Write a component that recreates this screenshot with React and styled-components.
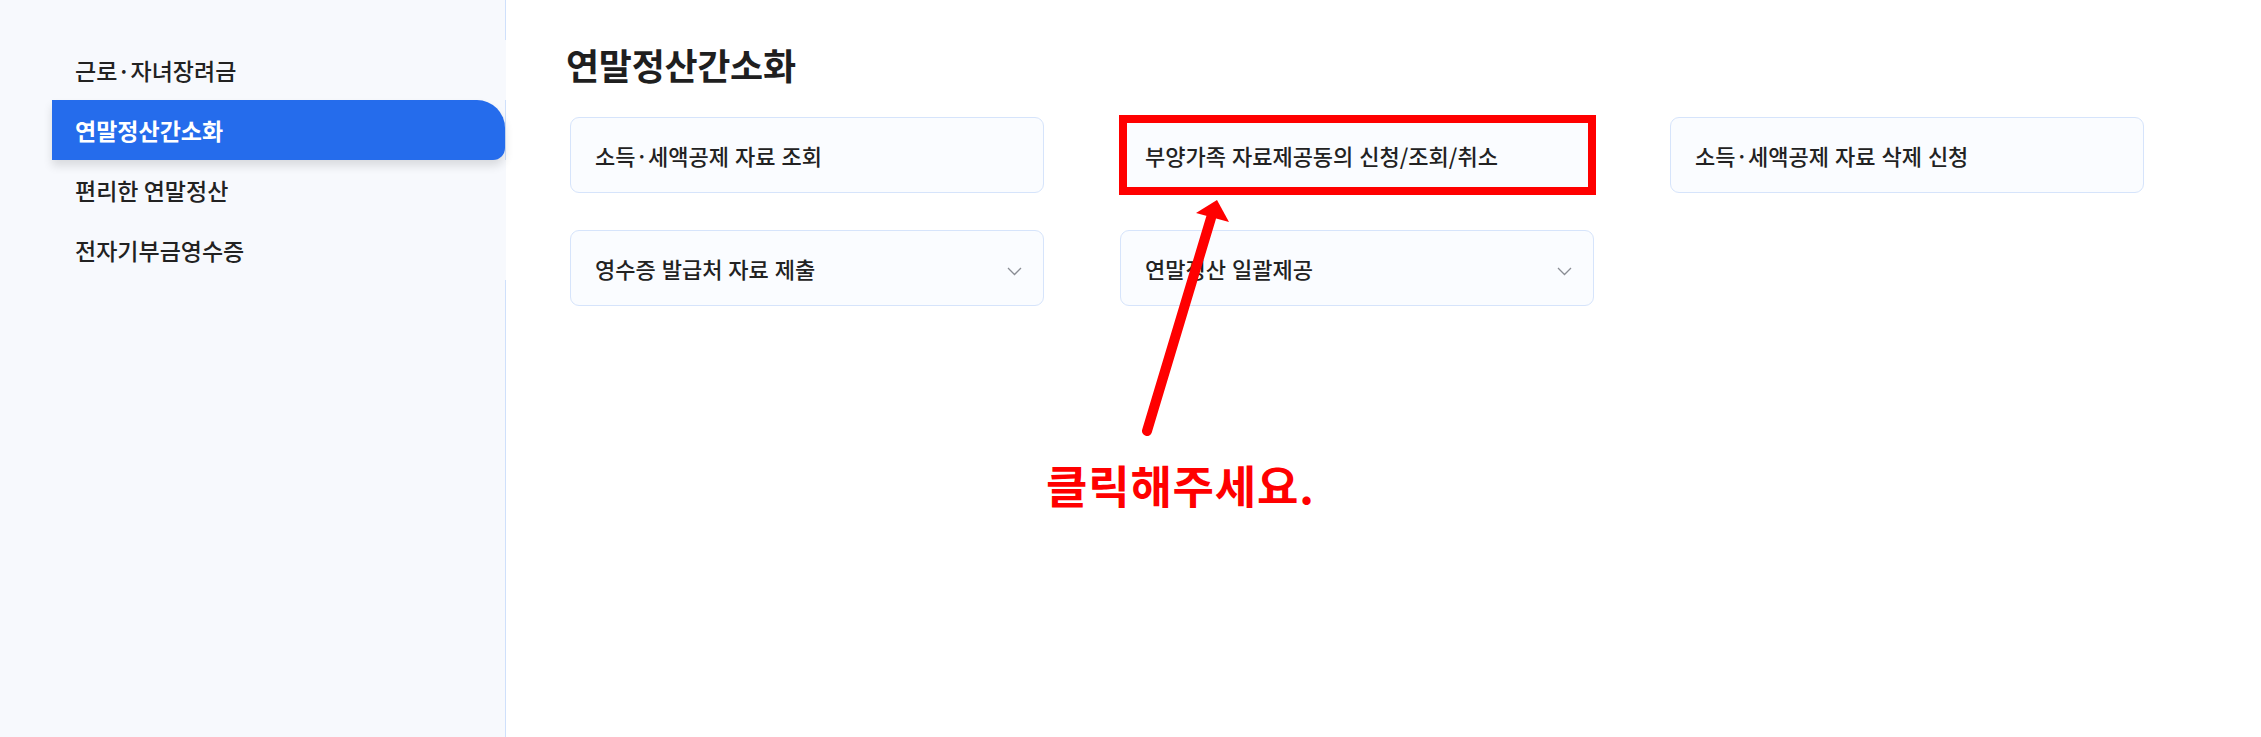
import React from 'react';
import styled, { createGlobalStyle } from 'styled-components';

const GlobalStyle = createGlobalStyle`
  html, body {
    margin: 0;
    padding: 0;
    background: #ffffff;
  }
  body {
    font-family: 'Noto Sans CJK KR', 'Noto Sans', sans-serif;
    color: #222222;
  }
  * {
    box-sizing: border-box;
  }
`;

const Page = styled.div`
  position: relative;
  display: flex;
  width: 2261px;
  height: 737px;
  overflow: hidden;
`;

const Sidebar = styled.aside`
  width: 506px;
  flex: none;
  padding: 40px 0 0 52px;
  background: #f7f9fd;
  border-right: 1px solid #cfe0fb;
`;

const Menu = styled.ul`
  list-style: none;
  margin: 0;
  padding: 0;
`;

const MenuItem = styled.li`
  height: 60px;
  display: flex;
  align-items: center;
  padding-left: 23px;
  margin-right: ${p => (p.active ? '0' : '-1px')};
  font-size: 23px;
  letter-spacing: 0;
  font-weight: ${p => (p.active ? 700 : 500)};
  color: ${p => (p.active ? '#ffffff' : '#222222')};
  background: ${p => (p.active ? '#256cec' : '#f7f9fd')};
  border-radius: ${p => (p.active ? '0 28px 12px 0' : '0')};
  box-shadow: ${p => (p.active ? '0 6px 10px rgba(0, 0, 0, 0.12)' : 'none')};
  position: relative;
  z-index: ${p => (p.active ? 1 : 0)};
`;

const Main = styled.main`
  flex: 1;
  padding: 42px 0 0 64px;
`;

const Title = styled.h1`
  margin: 0 0 31px -4px;
  font-size: 36px;
  line-height: 44px;
  font-weight: 700;
  letter-spacing: -0.3px;
  color: #1f1f1f;
`;

const CardGrid = styled.div`
  display: grid;
  grid-template-columns: repeat(3, 474px);
  grid-auto-rows: 76px;
  column-gap: 76px;
  row-gap: 37px;
`;

const Card = styled.div`
  position: relative;
  display: flex;
  align-items: center;
  justify-content: space-between;
  padding: 0 21px 0 24px;
  background: #fafcff;
  border: 1px solid #d6e4fb;
  border-radius: 9px;
  font-size: 22px;
  font-weight: 500;
  letter-spacing: 0;
  word-spacing: 1px;
  color: #222222;
`;

const Chevron = styled.svg`
  width: 15px;
  height: 9px;
  margin-top: 7px;
  flex: none;
`;

const Highlight = styled.div`
  position: absolute;
  top: -3px;
  bottom: -3px;
  left: -2px;
  right: -3px;
  border: 8px solid #ff0000;
  pointer-events: none;
`;

const Annotation = styled.div`
  position: absolute;
  left: 1040px;
  top: 190px;
  display: flex;
  flex-direction: column;
  pointer-events: none;
`;

const Arrow = styled.svg`
  width: 200px;
  height: 250px;
  display: block;
`;

const Hint = styled.div`
  margin: 19px 0 0 6px;
  font-size: 45px;
  line-height: 52px;
  font-weight: 700;
  letter-spacing: 0.8px;
  color: #ff0000;
`;

const menuItems = ['근로·자녀장려금', '연말정산간소화', '편리한 연말정산', '전자기부금영수증'];

const cards = [
  { label: '소득·세액공제 자료 조회' },
  { label: '부양가족 자료제공동의 신청/조회/취소', highlight: true },
  { label: '소득·세액공제 자료 삭제 신청' },
  { label: '영수증 발급처 자료 제출', dropdown: true },
  { label: '연말정산 일괄제공', dropdown: true },
];

const ChevronDown = () => (
  <Chevron viewBox="0 0 15 9">
    <polyline points="1,1 7.5,7.5 14,1" fill="none" stroke="#8a8d94" strokeWidth="1.3" />
  </Chevron>
);

const App = () => (
  <>
    <GlobalStyle />
    <Page>
      <Sidebar>
        <Menu>
          {menuItems.map(item => (
            <MenuItem key={item} active={item === '연말정산간소화'}>
              {item}
            </MenuItem>
          ))}
        </Menu>
      </Sidebar>
      <Main>
        <Title>연말정산간소화</Title>
        <CardGrid>
          {cards.map(card => (
            <Card key={card.label}>
              <span>{card.label}</span>
              {card.dropdown && <ChevronDown />}
              {card.highlight && <Highlight />}
            </Card>
          ))}
        </CardGrid>
      </Main>
      <Annotation>
        <Arrow viewBox="0 0 200 250">
          <line x1="107" y1="241" x2="171" y2="28" stroke="#ff0000" strokeWidth="10" strokeLinecap="round" />
          <polygon points="177,10 156,23 189,32" fill="#ff0000" />
        </Arrow>
        <Hint>클릭해주세요.</Hint>
      </Annotation>
    </Page>
  </>
);

export default App;
